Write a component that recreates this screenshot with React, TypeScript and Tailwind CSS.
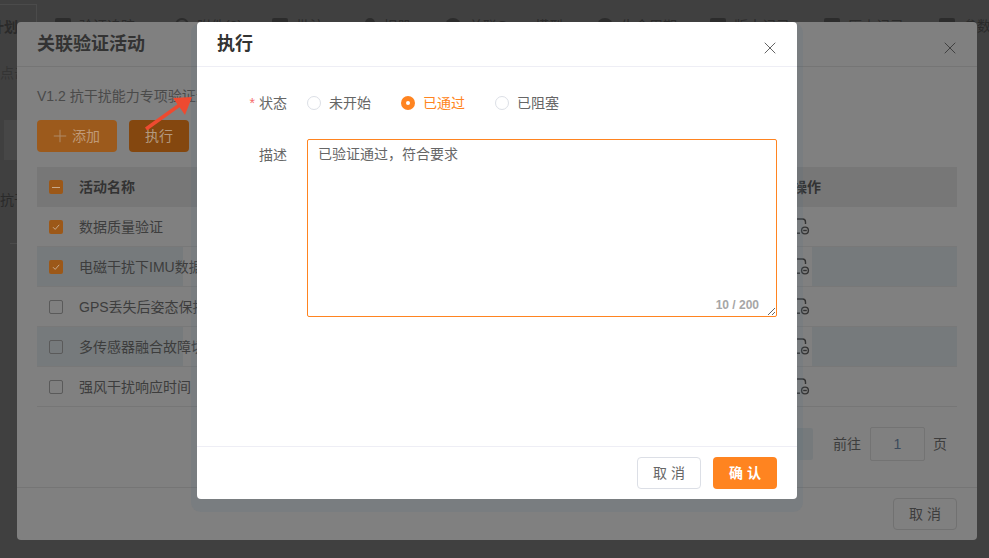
import { Plus, X } from "lucide-react";

const tabs = [
  { label: "验证追踪", width: "w-[120px]", icon: "box" },
  { label: "附件(0)", width: "w-[97px]", icon: "clip" },
  { label: "批注", width: "w-[90px]", icon: "box" },
  { label: "相册", width: "w-[83px]", icon: "person" },
  { label: "关联Query模型", width: "w-[152px]", icon: "round" },
  { label: "生命周期", width: "w-[113px]", icon: "round" },
  { label: "版本记录", width: "w-[114px]", icon: "box" },
  { label: "历史记录", width: "w-[115px]", icon: "box" },
  { label: "参数", width: "w-[60px]", icon: "box" },
];

const rows = [
  { name: "数据质量验证", checked: true, striped: false },
  { name: "电磁干扰下IMU数据稳定性验证", checked: true, striped: true },
  { name: "GPS丢失后姿态保持能力验证", checked: false, striped: false },
  { name: "多传感器融合故障切换验证", checked: false, striped: true },
  { name: "强风干扰响应时间", checked: false, striped: false },
];

function TabIcon({ kind }: { kind: string }) {
  if (kind === "clip") {
    return <span className="h-4 w-[14px] shrink-0 rounded-full border-2 border-[#2c2c2c]" />;
  }
  if (kind === "person") {
    return <span className="ml-[3px] h-[16px] w-[10px] shrink-0 rounded-full bg-[#2c2c2c]" />;
  }
  if (kind === "round") {
    return <span className="h-4 w-4 shrink-0 rounded-full bg-[#2c2c2c]" />;
  }
  return <span className="h-4 w-4 shrink-0 rounded-[2px] bg-[#2c2c2c]" />;
}

function CheckBox({ checked }: { checked?: boolean }) {
  return (
    <span
      className={
        checked
          ? "flex h-[14px] w-[14px] shrink-0 items-center justify-center rounded-[2px] bg-[#9c5818]"
          : "block h-[14px] w-[14px] shrink-0 rounded-[2px] border border-[#5a5a5a]"
      }
    >
      {checked && (
        <svg width="10" height="10" viewBox="0 0 10 10" fill="none">
          <path d="M2 5.2 4.2 7.4 8.2 2.8" stroke="#c8a98a" strokeWidth="1" />
        </svg>
      )}
    </span>
  );
}

function UnlinkIcon() {
  return (
    <svg width="16" height="18" viewBox="0 0 16 18" fill="none" stroke="#333" strokeWidth="1.4" className="shrink-0">
      <path d="M0 1h8.5a3 3 0 0 1 3 3v2" />
      <path d="M0 15.2h6" />
      <circle cx="11" cy="12.5" r="3.4" />
      <path d="M9.2 12.5h3.6" />
    </svg>
  );
}

function Radio({ label, active }: { label: string; active?: boolean }) {
  return (
    <div className="flex items-center gap-2">
      {active ? (
        <span className="flex h-[14px] w-[14px] items-center justify-center rounded-full bg-[#ff8420]">
          <span className="h-1 w-1 rounded-full bg-white" />
        </span>
      ) : (
        <span className="h-[14px] w-[14px] rounded-full border border-[#dcdfe6] bg-white" />
      )}
      <span className={active ? "text-[#ff8420]" : "text-[#666]"}>{label}</span>
    </div>
  );
}

export default function App() {
  return (
    <div className="relative h-[558px] w-[989px] overflow-hidden bg-[#404040] text-sm font-['Liberation_Sans','Noto_Sans_CJK_SC',sans-serif]">
      {/* page behind the dialogs */}
      <div className="flex h-[15px]">
        <div className="-ml-px mt-1 h-5 w-[38px] shrink-0 border border-b-0 border-[#4b4b4b]" />
      </div>
      <div className="flex text-[#2a2a2a]">
        <div className="w-[55px] shrink-0 overflow-hidden">
          <span className="-ml-[10px] block whitespace-nowrap pt-[2px] font-bold">计划</span>
        </div>
        {tabs.map((tab) => (
          <div key={tab.label} className={`flex shrink-0 items-center gap-2 whitespace-nowrap ${tab.width}`}>
            <TabIcon kind={tab.icon} />
            <span>{tab.label}</span>
          </div>
        ))}
      </div>
      <div className="w-[17px] overflow-hidden text-[#2a2a2a]">
        <p className="mt-[26px] whitespace-nowrap text-[#343434]">点击</p>
        <div className="ml-1 mt-[37px] h-10 w-[13px] bg-[#474747]" />
        <p className="mt-[30px] whitespace-nowrap">抗干</p>
        <div className="ml-[10px] mt-[33px] border-t border-[#4b4b4b]" />
      </div>

      {/* linked activities dialog */}
      <div className="absolute left-[17px] top-[22px] flex h-[518px] w-[960px] flex-col rounded bg-[#808080] text-[#3d3d3d]">
        <div className="flex h-[45px] shrink-0 items-center justify-between border-b border-[#757575] px-5">
          <h2 className="text-lg font-bold text-[#333]">关联验证活动</h2>
          <X size={20} strokeWidth={1.1} className="mr-[-3px] mt-2 text-[#3a3a3a]" />
        </div>
        <div className="flex min-h-0 flex-1 flex-col px-5">
          <p className="mt-[19px] whitespace-nowrap text-[#4a4a4a]">V1.2 抗干扰能力专项验证活动</p>
          <div className="mt-[14px] flex gap-3">
            <button className="flex h-8 w-20 items-center justify-center gap-[2px] rounded bg-[#9c5a1c] pr-1 text-[#c09a78]">
              <Plus size={20} strokeWidth={1.2} className="text-[#b08a66]" />
              添加
            </button>
            <button className="h-8 w-[60px] rounded bg-[#84470f] text-[#b39a80]">执行</button>
          </div>
          <div className="mt-[15px] w-[920px]">
            <div className="flex h-10 items-center bg-[#777777] font-bold text-[#333]">
              <div className="flex w-[146px] shrink-0 items-center gap-4 pl-3">
                <span className="flex h-[14px] w-[14px] shrink-0 items-center justify-center rounded-[2px] bg-[#9c5818]">
                  <span className="h-px w-2 bg-[#c8a98a]" />
                </span>
                活动名称
              </div>
              <div className="flex-1 text-right">
                <span className="mr-[-9px]">操作</span>
              </div>
              <div className="w-[145px] shrink-0" />
            </div>
            {rows.map((row) => (
              <div key={row.name} className="flex h-10 border-b border-[#787878] last:border-[#767676]">
                <div className={`flex w-[146px] shrink-0 items-center gap-4 pl-3 ${row.striped ? "bg-[#767a7c]" : ""}`}>
                  <CheckBox checked={row.checked} />
                  <span className="whitespace-nowrap">{row.name}</span>
                </div>
                <div className="flex flex-1 items-center justify-end">
                  <span className="mr-[2px] mt-px">
                    <UnlinkIcon />
                  </span>
                </div>
                <div className={`w-[145px] shrink-0 ${row.striped ? "bg-[#767a7c]" : ""}`} />
              </div>
            ))}
          </div>
          <div className="mt-5 flex items-center justify-end">
            <div className="mr-5 h-8 w-8 rounded-[2px] bg-[#767a7c]" />
            <span>前往</span>
            <div className="ml-[9px] mr-2 flex h-[34px] w-[55px] items-center justify-center rounded-[2px] border border-[#737373] text-[#3b4a5c]">
              1
            </div>
            <span>页</span>
            <div className="w-[10px]" />
          </div>
        </div>
        <div className="flex h-[53px] shrink-0 items-center justify-end border-t border-[#757575] px-5">
          <button className="h-8 w-16 rounded border border-[#717171] text-[#3d3d3d]">取 消</button>
        </div>
      </div>

      {/* annotation arrow */}
      <svg className="absolute left-[140px] top-[90px]" width="60" height="50" viewBox="0 0 60 50" fill="none">
        <path d="M6 39 41 14" stroke="#ee4a30" strokeWidth="3.5" />
        <path d="M52 7 33 8 45 25Z" fill="#ee4a30" />
      </svg>

      {/* execute dialog */}
      <div className="absolute left-[197px] top-[22px] flex h-[477px] w-[600px] flex-col rounded bg-white text-[#666] shadow-[0_7px_0_6px_rgba(90,110,125,0.18)]">
        <div className="flex h-[45px] shrink-0 items-center justify-between border-b border-[#eeeef5] px-5">
          <h2 className="text-lg font-bold text-[#333]">执行</h2>
          <X size={20} strokeWidth={1.1} className="mr-[-3px] mt-2 text-[#555]" />
        </div>
        <div className="flex-1 pr-5 pt-[26px]">
          <div className="flex h-5 items-center">
            <label className="w-[90px] shrink-0 text-right">
              <span className="mr-1 text-[#f56c6c]">*</span>状态
            </label>
            <div className="ml-5 flex gap-[30px]">
              <Radio label="未开始" />
              <Radio label="已通过" active />
              <Radio label="已阻塞" />
            </div>
          </div>
          <div className="mt-[26px] flex">
            <label className="mt-[6px] w-[90px] shrink-0 text-right">描述</label>
            <div className="relative ml-5 flex-1">
              <textarea
                readOnly
                defaultValue="已验证通过，符合要求"
                className="block h-[178px] w-full rounded-[2px] border border-[#ff8420] px-[10px] py-1 leading-[20px] text-[#666] outline-none"
              />
              <span className="absolute bottom-[4px] right-[18px] text-xs font-bold leading-4 text-[#a6a6a6]">10 / 200</span>
            </div>
          </div>
        </div>
        <div className="flex h-[53px] shrink-0 items-center justify-end gap-3 border-t border-[#eeeef5] px-5">
          <button className="h-8 w-16 rounded border border-[#dcdfe6] bg-white text-[#666]">取 消</button>
          <button className="h-8 w-16 rounded bg-[#ff8420] font-bold text-white">确 认</button>
        </div>
      </div>
    </div>
  );
}
